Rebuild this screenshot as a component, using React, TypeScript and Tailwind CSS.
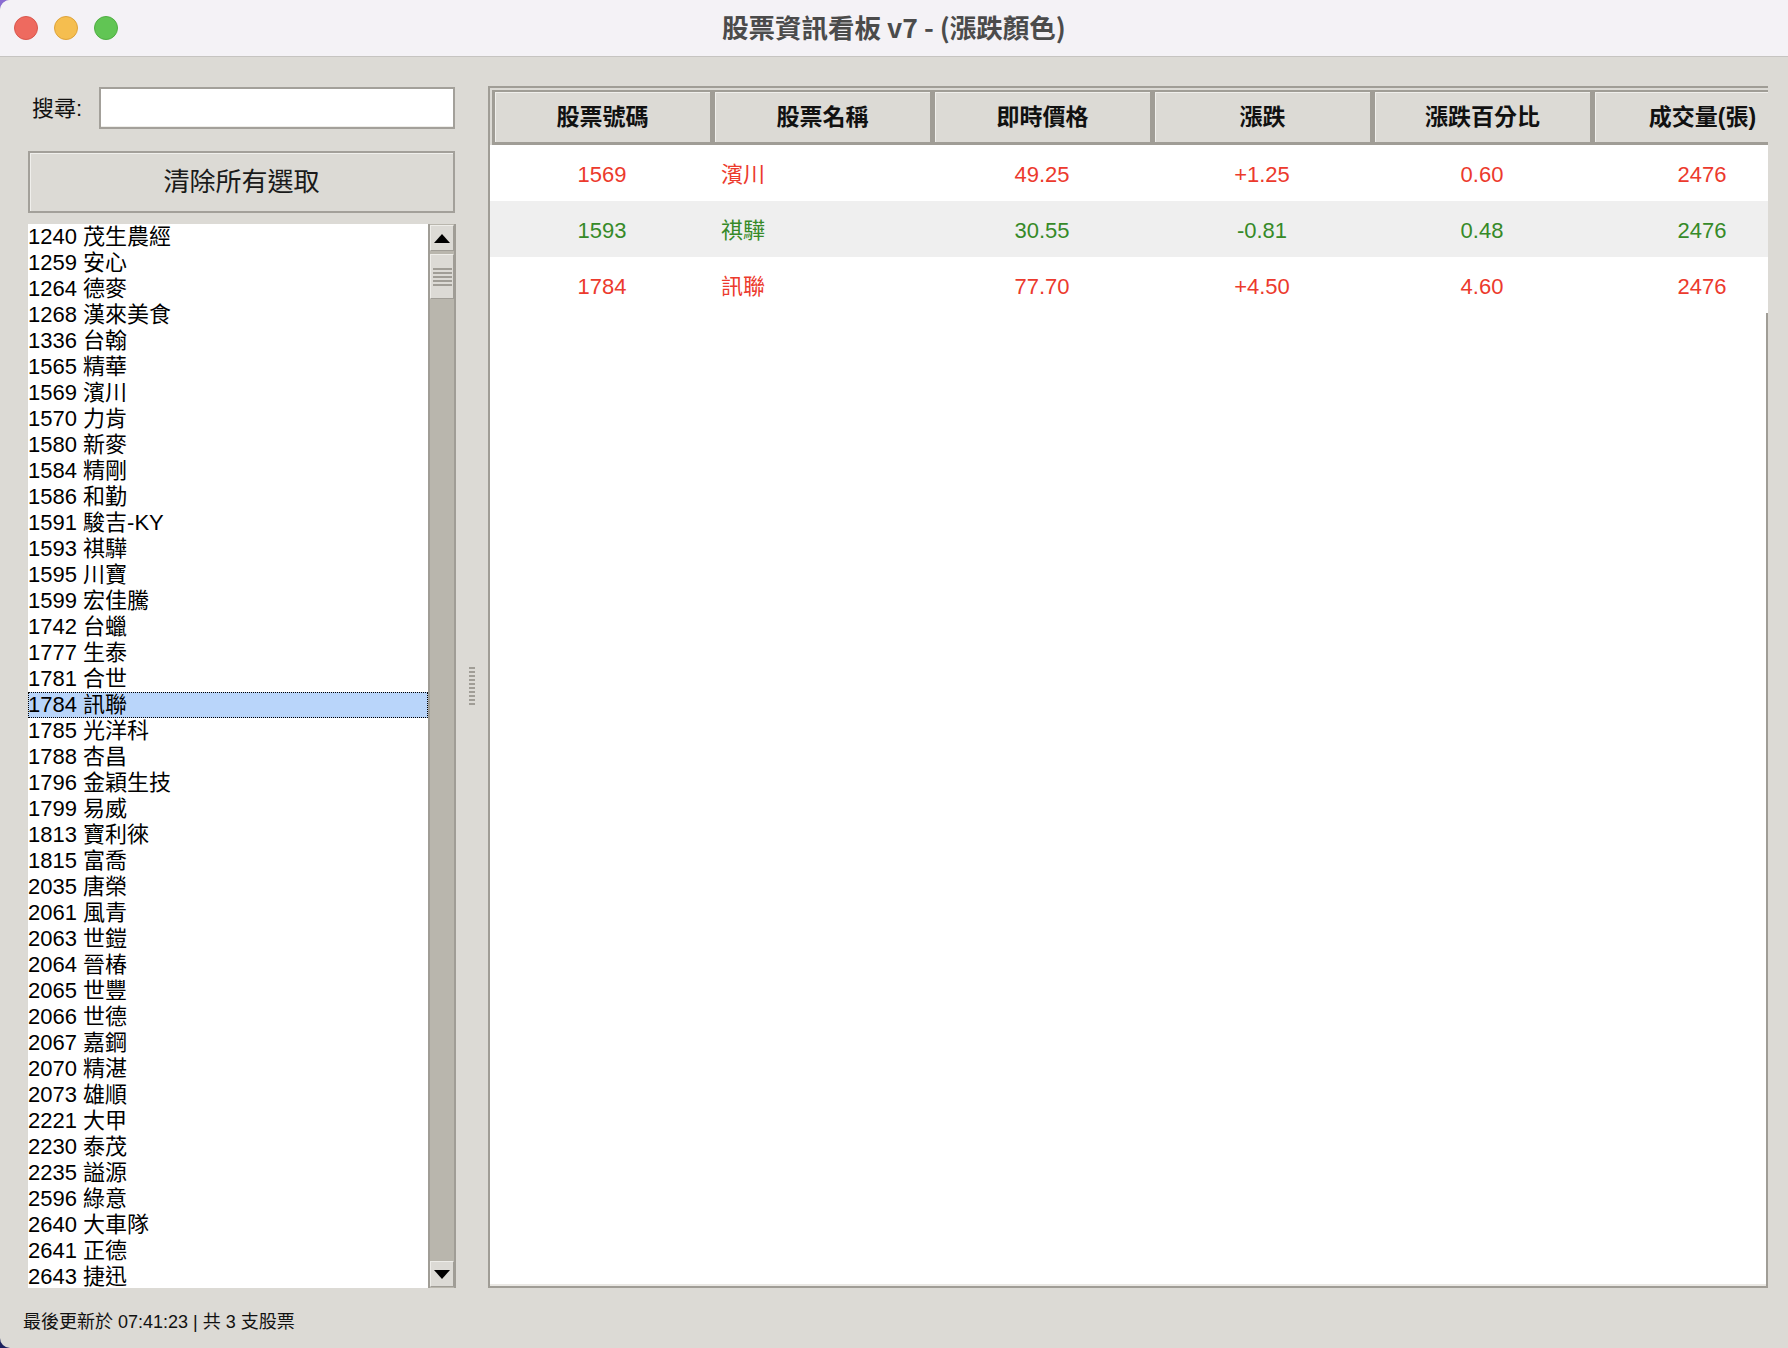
import React from "react";

const stockList = [
  "1240 茂生農經",
  "1259 安心",
  "1264 德麥",
  "1268 漢來美食",
  "1336 台翰",
  "1565 精華",
  "1569 濱川",
  "1570 力肯",
  "1580 新麥",
  "1584 精剛",
  "1586 和勤",
  "1591 駿吉-KY",
  "1593 祺驊",
  "1595 川寶",
  "1599 宏佳騰",
  "1742 台蠟",
  "1777 生泰",
  "1781 合世",
  "1784 訊聯",
  "1785 光洋科",
  "1788 杏昌",
  "1796 金穎生技",
  "1799 易威",
  "1813 寶利徠",
  "1815 富喬",
  "2035 唐榮",
  "2061 風青",
  "2063 世鎧",
  "2064 晉椿",
  "2065 世豐",
  "2066 世德",
  "2067 嘉鋼",
  "2070 精湛",
  "2073 雄順",
  "2221 大甲",
  "2230 泰茂",
  "2235 謚源",
  "2596 綠意",
  "2640 大車隊",
  "2641 正德",
  "2643 捷迅",
];

const selected = "1784 訊聯";

const columns = ["股票號碼", "股票名稱", "即時價格", "漲跌", "漲跌百分比", "成交量(張)"];

const rows = [
  { code: "1569", name: "濱川", price: "49.25", change: "+1.25", pct: "0.60", volume: "2476", up: true },
  { code: "1593", name: "祺驊", price: "30.55", change: "-0.81", pct: "0.48", volume: "2476", up: false },
  { code: "1784", name: "訊聯", price: "77.70", change: "+4.50", pct: "4.60", volume: "2476", up: true },
];

const TitleBar = () => (
  <div className="h-[57px] shrink-0 grid grid-cols-[1fr_auto_1fr] items-center bg-[#f4f2f6] border-b border-[#c6c4c1]">
    <div className="flex items-center gap-[16px] pl-[14px]">
      <div className="w-[24px] h-[24px] rounded-full bg-[#ee6a5f] border border-[#d9574d]" />
      <div className="w-[24px] h-[24px] rounded-full bg-[#f5be4f] border border-[#dea33a]" />
      <div className="w-[24px] h-[24px] rounded-full bg-[#61c554] border border-[#4fae43]" />
    </div>
    <div className="pb-[3px] text-[26.5px] font-bold text-[#4b4b4b] font-['Noto_Sans_CJK_TC',sans-serif]">
      股票資訊看板 v7 - (漲跌顏色)
    </div>
    <div />
  </div>
);

const Arrow = ({ down }: { down?: boolean }) => (
  <svg width="16" height="9" viewBox="0 0 16 9">
    {down ? <polygon points="0,0 16,0 8,9" fill="#000" /> : <polygon points="8,0 16,9 0,9" fill="#000" />}
  </svg>
);

const ScrollBar = () => (
  <div className="w-[28px] shrink-0 flex flex-col bg-[#b9b6ad] border-x-2 border-[#a09d96]">
    <div className="h-[26px] mt-[1px] flex items-center justify-center bg-[#dcdad5] border border-[#eeede9] border-b-[#a09d96] border-r-[#a09d96]">
      <Arrow />
    </div>
    <div className="h-[3px]" />
    <div className="h-[45px] flex flex-col items-center justify-center gap-[2px] bg-[#dcdad5] border border-[#eeede9] border-b-[#a09d96] border-r-[#a09d96]">
      {[0, 1, 2, 3, 4].map((i) => (
        <div key={i} className="w-[19px] h-[2px] bg-[#a09d96]" />
      ))}
    </div>
    <div className="flex-1" />
    <div className="h-[26px] mb-[1px] flex items-center justify-center bg-[#dcdad5] border border-[#eeede9] border-b-[#a09d96] border-r-[#a09d96]">
      <Arrow down />
    </div>
  </div>
);

const LeftPanel = () => (
  <div className="w-[428px] shrink-0 flex flex-col">
    <div className="mt-[1px] h-[42px] flex items-center">
      <span className="w-[71px] pl-[4px] text-[22px] text-[#111]">搜尋:</span>
      <div className="w-[356px] h-[42px] bg-white border-2 border-[#a3a09a] shadow-[inset_0_-1px_0_#eeede9]" />
    </div>
    <button className="mt-[22px] w-[427px] h-[62px] flex items-center justify-center bg-[#dcdad5] border-2 border-[#a3a09a] shadow-[inset_1px_1px_0_#f0efec] text-[26px] text-[#1a1a1a]">
      清除所有選取
    </button>
    <div className="mt-[11px] flex-1 min-h-0 flex">
      <div className="w-[400px] bg-white overflow-hidden">
        {stockList.map((s) =>
          s === selected ? (
            <div
              key={s}
              className="h-[26px] leading-[26px] text-[22px] text-black bg-[#b9d5fa] outline-1 outline-dotted outline-black -outline-offset-1 whitespace-nowrap"
            >
              {s}
            </div>
          ) : (
            <div key={s} className="h-[26px] leading-[26px] text-[22px] text-black whitespace-nowrap">
              {s}
            </div>
          )
        )}
      </div>
      <ScrollBar />
    </div>
  </div>
);

const Sash = () => (
  <div className="w-[32px] shrink-0 flex items-center justify-center">
    <div className="flex flex-col gap-[2px] mb-[3px]">
      {[0, 1, 2, 3, 4, 5, 6, 7, 8, 9].map((i) => (
        <div key={i} className="w-[6px] h-[2px] bg-[#a09d96]" />
      ))}
    </div>
  </div>
);

const StockTable = () => (
  <div className="w-[1280px] shrink-0 flex flex-col bg-white border-l-2 border-t-2 border-b-2 border-[#a09d96] overflow-hidden">
    <div className="bg-[#dcdad5] pt-[2px] pl-[2px] flex">
      {columns.map((c) => (
        <div
          key={c}
          className="w-[220px] h-[55px] shrink-0 flex items-center justify-center bg-[#dcdad5] border-t-2 border-b-[3px] border-l-[3px] border-r-2 border-[#a09d96] shadow-[inset_1px_1px_0_#f0efec] text-[23px] font-bold text-[#111]"
        >
          {c}
        </div>
      ))}
    </div>
    {rows.map((r, i) => (
      <div
        key={r.code}
        className={`h-[56px] shrink-0 pl-[2px] pt-[2px] flex items-center text-[22px] ${i % 2 === 1 ? "bg-[#efefef]" : "bg-white"} ${
          r.up ? "text-[#ec3a2d]" : "text-[#368a28]"
        }`}
      >
        <div className="w-[220px] shrink-0 text-center">{r.code}</div>
        <div className="w-[220px] shrink-0 pl-[9px]">{r.name}</div>
        <div className="w-[220px] shrink-0 text-center">{r.price}</div>
        <div className="w-[220px] shrink-0 text-center">{r.change}</div>
        <div className="w-[220px] shrink-0 text-center">{r.pct}</div>
        <div className="w-[220px] shrink-0 text-center">{r.volume}</div>
      </div>
    ))}
    <div className="flex-1 border-r-2 border-[#a09d96] shadow-[inset_0_-2px_0_#eae8e4]" />
  </div>
);

export default function App() {
  return (
    <div className="w-[1788px] h-[1348px] bg-linear-to-b from-[#8a6cd2] to-[#1c205e] font-['Liberation_Sans','Noto_Sans_CJK_TC',sans-serif]">
      <div className="w-full h-full flex flex-col bg-[#dcdad5] rounded-l-[10px] overflow-hidden">
        <TitleBar />
        <div className="flex-1 flex flex-col pt-[29px]">
          <div className="h-[1202px] flex pl-[28px]">
            <LeftPanel />
            <Sash />
            <StockTable />
          </div>
          <div className="pl-[23px] pt-[22px] text-[18px] leading-[24px] text-[#111]">
            最後更新於 07:41:23 | 共 3 支股票
          </div>
        </div>
      </div>
    </div>
  );
}
